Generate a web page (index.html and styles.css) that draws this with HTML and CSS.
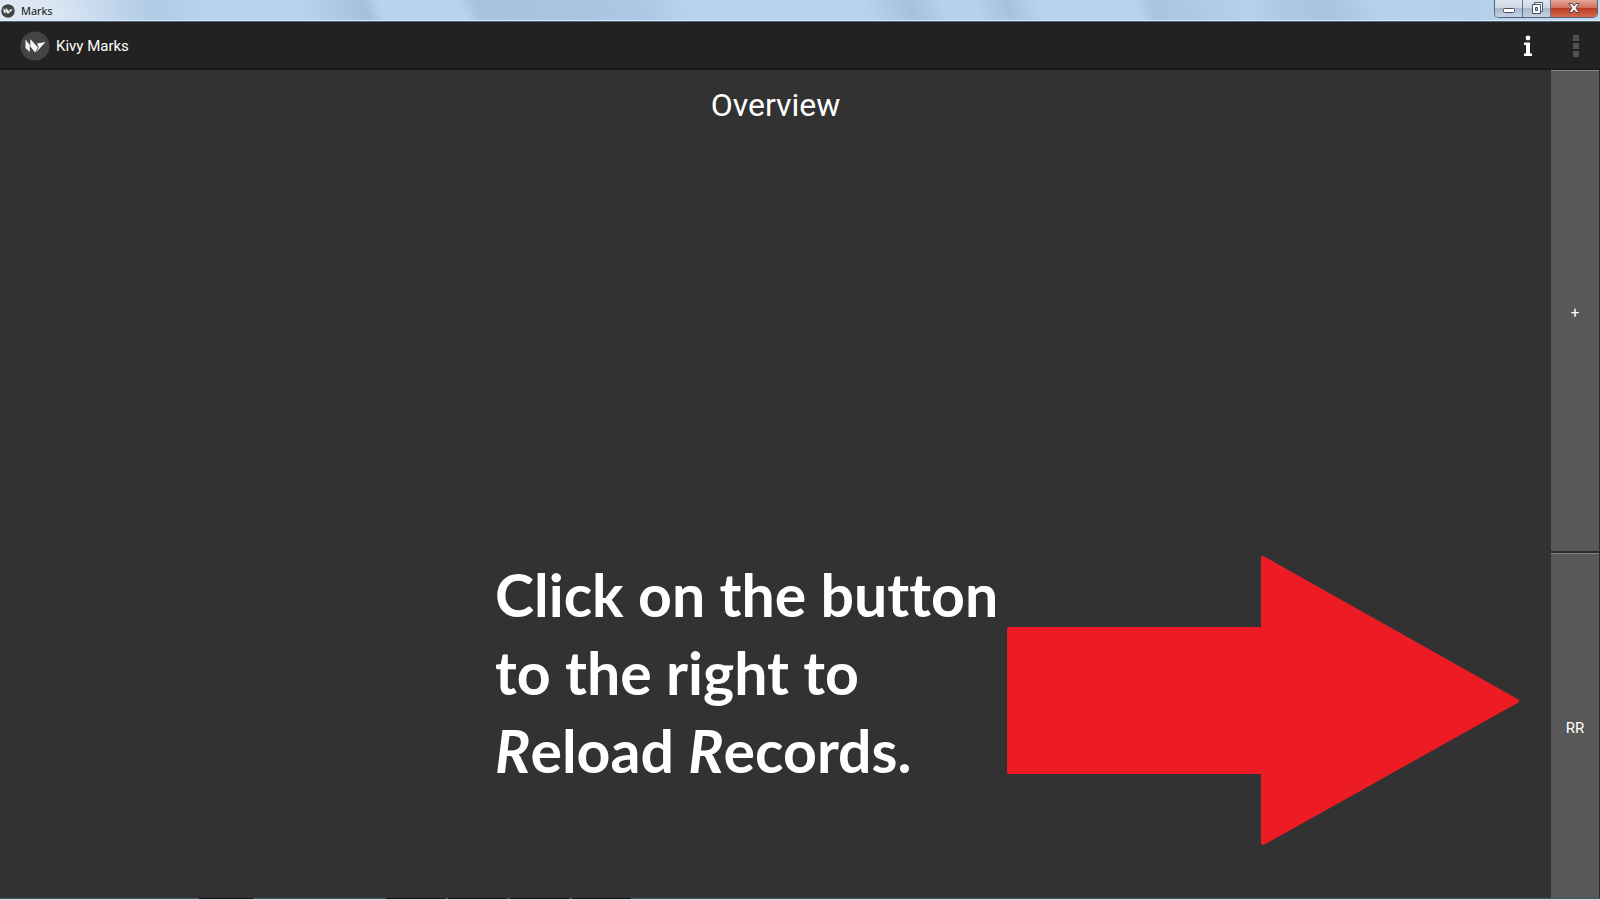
FILE: index.html
```html
<!DOCTYPE html>
<html lang="en">
<head>
<meta charset="utf-8">
<title>Marks</title>
<link rel="stylesheet" href="styles.css">
</head>
<body>
<svg class="defs" aria-hidden="true">
  <symbol id="kivy" viewBox="0 0 30 30">
    <circle cx="15" cy="15" r="14.500" fill="#434445"/>
    <path d="M5.500 8.500L9.800 14V21L5.500 17ZM10.300 8L18 16.500L15 21.500L10.300 15.500ZM17 12.500L25.500 11L16 21.500L18.700 16.500Z" fill="#f4f4f4"/>
  </symbol>
</svg>
<div class="window">
  <header class="titlebar">
    <svg class="titlebar-icon" aria-hidden="true"><use href="#kivy"/></svg>
    <span class="titlebar-text">Marks</span>
    <div class="controls">
      <button class="control" aria-label="Minimize">
        <svg width="14" height="14" viewBox="0 0 14 14"><rect x="1.500" y="7.500" width="11" height="4" rx="1" fill="#fff" stroke="#4b5268"/></svg>
      </button>
      <button class="control" aria-label="Restore">
        <svg width="14" height="14" viewBox="0 0 14 14" fill="#fff" stroke="#4b5268"><path d="M4.500 1.500H12.500V10.500H4.500Z"/><path d="M2.500 3.500H10.500V12.500H2.500Z"/><path d="M5.500 6.500H7.500V9.500H5.500Z" fill="#b5c2d3"/></svg>
      </button>
      <button class="control control-close" aria-label="Close">
        <svg width="14" height="14" viewBox="0 0 14 14"><path d="M2 2.500H5L7 5L9 2.500H12L9 7L12 11.500H9L7 9L5 11.500H2L5 7Z" fill="#fff" stroke="#59454e"/></svg>
      </button>
    </div>
  </header>
  <nav class="actionbar">
    <svg class="logo" aria-hidden="true"><use href="#kivy"/></svg>
    <span class="app-name">Kivy Marks</span>
    <button class="action" aria-label="Information">
      <svg width="10" height="22" viewBox="0 0 10 22" fill="#fff"><circle cx="5" cy="3" r="2.400"/><path d="M1 7.500H7V18.500H9V21H1V18.500H3V10H1Z"/></svg>
    </button>
    <button class="action" aria-label="More options">
      <svg width="6" height="22" viewBox="0 0 6 22" fill="#505050"><path d="M0 0H6V6H0ZM0 8H6V14H0ZM0 16H6V22H0Z"/></svg>
    </button>
  </nav>
  <div class="content">
    <main class="overview">
      <h1 class="heading">Overview</h1>
      <div class="hint">
        <p class="hint-text">Click on the button<br>to the right to<br><em>R</em>eload <em>R</em>ecords.</p>
        <svg class="arrow" viewBox="0 0 512 290" aria-hidden="true"><path d="M2 73H256V2L510 145L256 287V216H2Z" fill="#ed1c24" stroke="#ed1c24" stroke-width="4" stroke-linejoin="round"/></svg>
      </div>
    </main>
    <aside class="side">
      <button class="side-button side-add">+</button>
      <button class="side-button side-reload">RR</button>
    </aside>
  </div>
  <div class="taskbar">
    <span class="task task-first"></span>
    <span class="task"></span>
    <span class="task"></span>
    <span class="task"></span>
    <span class="task"></span>
  </div>
</div>
</body>
</html>
```
FILE: styles.css
```css
* { box-sizing: border-box; }
body { margin: 0; background: #323232; color: #fff; font-family: Roboto, sans-serif; }
button { margin: 0; padding: 0; border: 0; color: inherit; font: inherit; }
.defs { position: absolute; width: 0; height: 0; }
.window { display: flex; flex-direction: column; min-height: 100vh; }

.titlebar {
  display: flex;
  align-items: flex-start;
  height: 22px;
  padding: 0 2px 0 1px;
  border-bottom: 1px solid #4f6174;
  box-shadow: inset 0 -1px #dcecfa;
  background: linear-gradient(68deg, #dfe8f4 0%, #dae5f3 4%, #bcd2ea 8%, #b0cbe6 10%, #b7d3ee 13%, #b7d3ee 19%, #a5c0db 23%, #b7d3ee 24%, #b7d3ee 29%, #a7c2dd 30%, #abc7e3 40%, #b7d3ee 43%, #b7d3ee 54%, #a6c1dc 57%, #b5d1ec 59%, #b5d1ec 61%, #a7c2dd 63%, #b7d3ee 65%, #b7d3ee 71%, #a9c4df 72%, #b5d1ec 78%, #acc8e3 80%, #a9c4df 83%, #b5d1ec 86%, #b4cfe9 92%, #c1daf2 100%);
}
.titlebar-icon { width: 14px; height: 14px; margin-top: 4px; }
.titlebar-text { margin-left: 6px; color: #000; font: 11px/21px "Open Sans", sans-serif; }
.controls {
  display: flex;
  height: 18px;
  margin-left: auto;
  overflow: hidden;
  border: 1px solid #566171;
  border-top: 0;
  border-radius: 0 0 5px 5px;
}
.control {
  display: flex;
  align-items: center;
  justify-content: center;
  width: 28px;
  padding-bottom: 1px;
  border-right: 1px solid #66748a;
  background: linear-gradient(#dde6f0 0, #cdd8e5 45%, #a9b8cc 50%, #c3d3e5 100%);
}
.control-close { width: 46px; border-right: 0; background: linear-gradient(#e3a79b 0, #d2705c 45%, #b83d26 50%, #d66a49 100%); }

.actionbar {
  display: flex;
  align-items: center;
  height: 48px;
  padding: 2px 0 0 20px;
  border-bottom: 2px solid #1b1b1b;
  background: #222;
}
.logo { width: 30px; height: 30px; }
.app-name { flex: 1; margin-left: 6px; font-size: 15px; }
.action { display: flex; align-items: center; justify-content: center; width: 48px; height: 44px; background: none; }

.content { display: flex; flex: 1; }
.overview { display: flex; flex: 1; flex-direction: column; justify-content: space-between; }
.heading { margin: 16px 0 0; font-size: 32px; font-weight: 400; line-height: 38px; text-align: center; }
.hint { display: flex; align-items: flex-start; justify-content: flex-end; padding: 0 32px 52px 0; }
.hint-text {
  width: 512px;
  margin: 0;
  font: 700 59px/78px Lato, sans-serif;
  font-variant-ligatures: none;
  white-space: nowrap;
}
.arrow { width: 512px; height: 290px; }

.side { display: flex; flex-direction: column; gap: 2px; width: 49px; padding-right: 1px; background: #2b2b2b; }
.side-button { padding-top: 4px; border-top: 1px solid #858585; background: #585858; font-size: 15px; }
.side-add { flex: 7; }
.side-reload { flex: 5; }

.taskbar { display: flex; gap: 3px; height: 2px; padding-left: 199px; border-bottom: 1px solid #d3dae3; background: #465769; }
.task { width: 59px; height: 1px; background: #111; }
.task-first { width: 54px; margin-right: 130px; }
```
